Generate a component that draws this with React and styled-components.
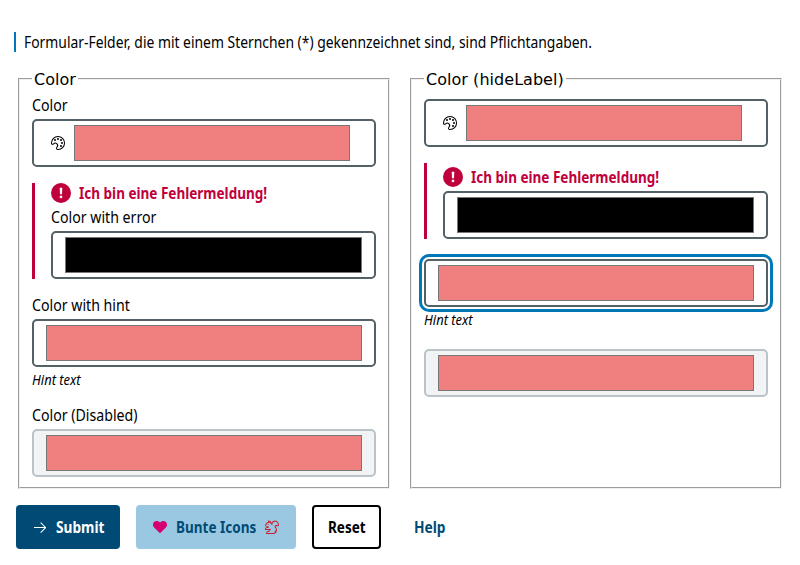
import React from 'react';
import styled, { createGlobalStyle } from 'styled-components';
import { VscArrowRight, VscHeartFilled, VscSymbolColor, VscSquirrel } from 'react-icons/vsc';

const GlobalStyle = createGlobalStyle`
  * { box-sizing: border-box; }
  body {
    margin: 0;
    background: #fff;
    color: #000;
    font: 16px/20px "Noto Sans", "Open Sans", sans-serif;
  }
`;

const Page = styled.main`
  padding: 32px 16px 16px;
`;

const Notice = styled.p`
  margin: 0 0 17px -2px;
  padding-left: 8px;
  height: 20px;
  border-left: 2px solid #0077b6;
`;

/* Condensed text: glyphs are narrowed, $width keeps the layout box in step. */
const Text = styled.span`
  display: block;
  width: ${(p) => (p.$width ? `${p.$width}px` : 'max-content')};
  white-space: nowrap;
  font-size: ${(p) => p.$size || 16}px;
  font-weight: ${(p) => (p.$bold ? 700 : 400)};
  line-height: 20px;
  text-align: left;
  transform: scaleX(${(p) => p.$scale || (p.$bold ? 0.845 : 0.885)});
  transform-origin: left center;
`;

const Columns = styled.div`
  display: grid;
  grid-template-columns: 1fr 1fr;
  gap: 16px;
`;

const Fieldset = styled.fieldset`
  margin: 0 2px;
  padding: 6px 12px 10px;
  border: 2px groove #f0f0f0;
  min-width: 0;
`;

const Legend = styled.legend`
  padding: 2px 2px 0;
  font: 16px/18px "DejaVu Sans", sans-serif;
  letter-spacing: 0.04px;
`;

const Fields = styled.div`
  display: flex;
  flex-direction: column;
  gap: 16px;
`;

const FieldBox = styled.div`
  display: flex;
  flex-direction: column;
  gap: 4px;
  padding-top: ${(p) => (p.$hideLabel ? 4 : 0)}px;
  ${(p) => p.$error && 'border-left: 3px solid #c0003c; padding-left: 16px;'}
`;

const Label = styled.label`
  height: 20px;
`;

const ErrorMessage = styled.div`
  display: flex;
  align-items: center;
  gap: 8px;
  height: 20px;
  color: #c0003c;
`;

const Hint = styled.div`
  height: 18px;
  margin: -1px 0 1px;
  font-style: italic;
`;

const InputFrame = styled.div`
  display: flex;
  align-items: center;
  height: 48px;
  padding: 0 ${(p) => (p.$icon ? '24px 0 16px' : '12px')};
  border: 2px solid ${(p) => (p.$disabled ? '#bac4c8' : '#536066')};
  border-radius: 5px;
  background: ${(p) => (p.$disabled ? '#f2f3f4' : '#fff')};
  ${(p) => p.$focused && 'outline: 3px solid #0077b6; outline-offset: 2px;'}
  svg { margin-right: 8px; flex: none; }
`;

const Swatch = styled.div`
  flex: 1;
  height: 36px;
  border: 1px solid #777;
  background: ${(p) => p.$color};
`;

const Actions = styled.div`
  display: flex;
  gap: 16px;
  margin-top: 16px;
`;

const variants = {
  primary: 'background: #004b76; color: #fff;',
  secondary: 'background: #9ac8e2; color: #004b76;',
  normal: 'background: #fff; color: #000; border-color: #000;',
  ghost: 'background: transparent; color: #004b76;',
};

const Button = styled.button`
  display: flex;
  align-items: center;
  justify-content: center;
  gap: 8px;
  width: ${(p) => p.$width}px;
  height: 44px;
  padding: 0;
  border: 2px solid transparent;
  border-radius: 4px;
  background-clip: border-box;
  font-family: inherit;
  svg { flex: none; }
  ${(p) => variants[p.$variant]}
`;

function ColorField({ label, hideLabel, color = '#f08080', error, hint, icon, disabled, focused }) {
  return (
    <FieldBox $error={error} $hideLabel={hideLabel}>
      {error && (
        <ErrorMessage>
          <svg width="20" height="20" viewBox="0 0 20 20">
            <circle cx="10" cy="10" r="10" fill="#c0003c" />
            <path d="M8.7 4.8h2.6l-.3 6.4H9z" fill="#fff" />
            <rect x="8.8" y="12.7" width="2.4" height="2.4" fill="#fff" />
          </svg>
          <Text $bold>{error}</Text>
        </ErrorMessage>
      )}
      {!hideLabel && <Label><Text>{label}</Text></Label>}
      <InputFrame $icon={icon} $disabled={disabled} $focused={focused}>
        {icon && <VscSymbolColor size={16} />}
        <Swatch $color={color} role="button" aria-label={label} />
      </InputFrame>
      {hint && <Hint><Text $size={14} $scale={0.925}>{hint}</Text></Hint>}
    </FieldBox>
  );
}

function ColorGroup({ title, hideLabel, focusHint }) {
  return (
    <Fieldset>
      <Legend>{title}</Legend>
      <Fields>
        <ColorField label="Color" hideLabel={hideLabel} icon />
        <ColorField label="Color with error" hideLabel={hideLabel} color="#000" error="Ich bin eine Fehlermeldung!" />
        <ColorField label="Color with hint" hideLabel={hideLabel} hint="Hint text" focused={focusHint} />
        <ColorField label="Color (Disabled)" hideLabel={hideLabel} disabled />
      </Fields>
    </Fieldset>
  );
}

export default function App() {
  return (
    <Page>
      <GlobalStyle />
      <Notice><Text $scale={0.868}>Formular-Felder, die mit einem Sternchen (*) gekennzeichnet sind, sind Pflichtangaben.</Text></Notice>
      <Columns>
        <ColorGroup title="Color" />
        <ColorGroup title="Color (hideLabel)" hideLabel focusHint />
      </Columns>
      <Actions>
        <Button $variant="primary" $width={104}>
          <VscArrowRight size={16} />
          <Text $bold $width={48} $scale={0.855}>Submit</Text>
        </Button>
        <Button $variant="secondary" $width={160}>
          <VscHeartFilled size={16} color="#d40073" />
          <Text $bold $width={80}>Bunte Icons</Text>
          <VscSquirrel size={16} color="#c8202f" />
        </Button>
        <Button $variant="normal" $width={69}><Text $bold $width={37}>Reset</Text></Button>
        <Button $variant="ghost" $width={65}><Text $bold $width={32} $scale={0.86}>Help</Text></Button>
      </Actions>
    </Page>
  );
}
